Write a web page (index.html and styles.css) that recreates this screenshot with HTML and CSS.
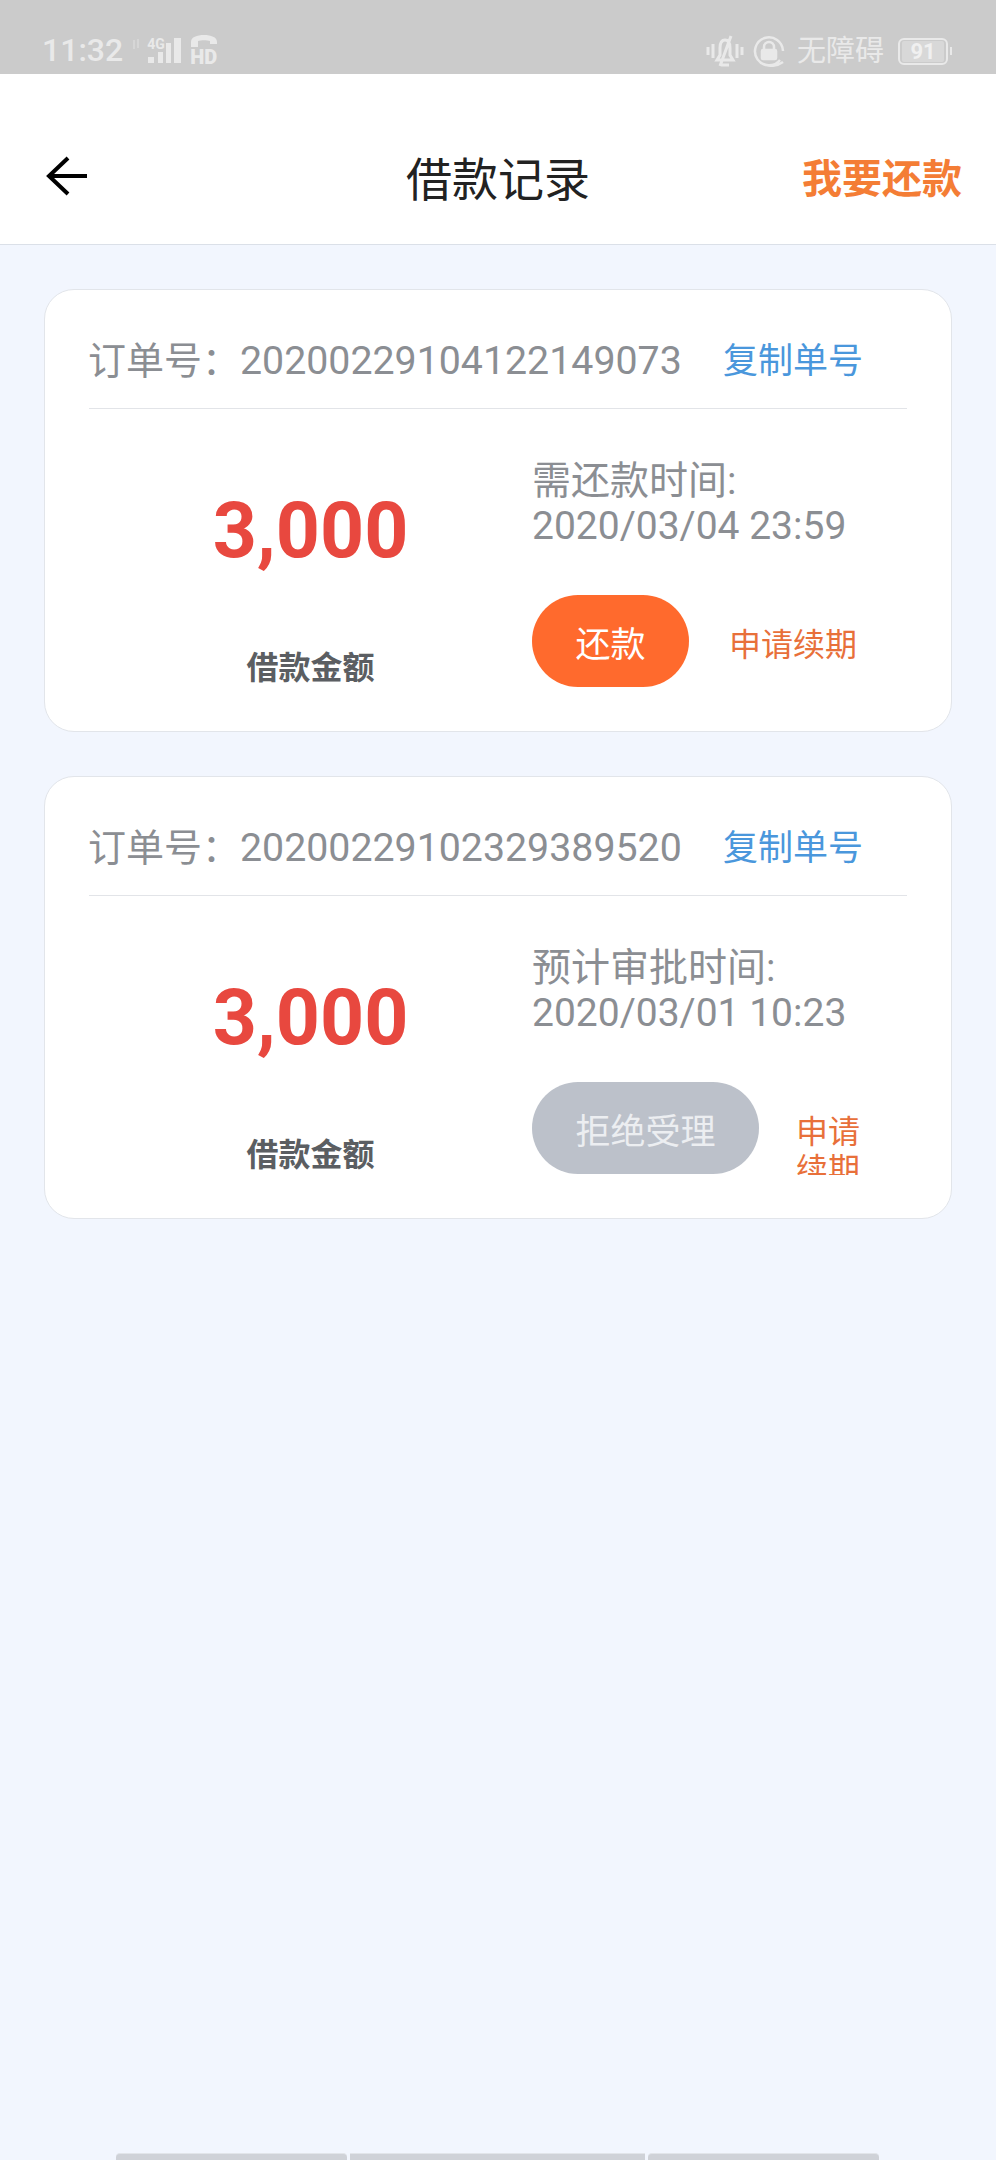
FILE: index.html
```html
<!DOCTYPE html>
<html lang="zh-CN">
<head>
  <meta charset="UTF-8" />
  <meta name="viewport" content="width=device-width, initial-scale=1.0" />
  <title>借款记录</title>
  <link rel="stylesheet" href="styles.css">
</head>
<body>
  <div class="status-bar">
    <div class="status-left">
      <span class="clock">11:32</span>
      <svg class="data-arrows" width="8" height="10" viewBox="0 0 8 10" fill="none" stroke="#dadada" stroke-width="1.5">
        <path d="M2 10V1M6 0v9" />
      </svg>
      <div class="signal">
        <span class="net">4G</span>
        <svg width="36" height="26" viewBox="0 0 36 26" fill="#e9e9e9">
          <rect x="0" y="19" width="6" height="6" />
          <rect x="10" y="14" width="5" height="11" />
          <rect x="18" y="5" width="5" height="20" />
          <rect x="26" y="0" width="7" height="25" />
        </svg>
      </div>
      <div class="hd">
        <svg width="28" height="14" viewBox="0 0 28 14" fill="#e9e9e9">
          <path d="M1 13V8C1 3 7 1 14 1s13 2 13 7v2h-7V7c-3-1-9-1-12 0v6z" />
        </svg>
        <span>HD</span>
      </div>
    </div>
    <div class="status-right">
      <svg class="bell" width="38" height="32" viewBox="0 0 38 32" fill="none" stroke="#e9e9e9" stroke-width="3">
        <path d="M2 12v8M7 9v14M31 9v14M36 12v8" />
        <path d="M11 25h16l-3-5v-7c0-5-2-8-5-8s-5 3-5 8v7zM15 30h8M25 1L14 31" />
      </svg>
      <svg width="32" height="32" viewBox="0 0 32 32" fill="none" stroke="#e9e9e9" stroke-width="2.5">
        <path d="M27 25A14 14 0 1 1 30 16M30 27c-7 5-15 4-20 2" />
        <path d="M11 15v-3a5 5 0 0 1 10 0v3" />
        <rect x="9" y="15" width="14" height="9" rx="1" fill="#e9e9e9" />
      </svg>
      <span class="access">无障碍</span>
      <div class="battery">
        <div class="battery-body"><span>91</span></div>
        <div class="battery-tip"></div>
      </div>
    </div>
  </div>

  <header class="nav">
    <svg class="back" width="44" height="40" viewBox="0 0 44 40" fill="none" stroke="#000" stroke-width="4">
      <path d="M42 20H4M23 2L4 20l19 18" />
    </svg>
    <h1>借款记录</h1>
    <a class="repay-link">我要还款</a>
  </header>

  <main class="list">
    <section class="card">
      <div class="order">
        <span class="order-no">订单号：<span class="num-long">20200229104122149073</span></span>
        <a class="copy">复制单号</a>
      </div>
      <div class="card-body">
        <div class="amount">
          <div class="amount-value">3,000</div>
          <div class="amount-label">借款金额</div>
        </div>
        <div class="detail">
          <div class="time">
            <div>需还款时间:</div>
            <div>2020/03/04 23:59</div>
          </div>
          <div class="actions">
            <button class="btn btn-repay">还款</button>
            <a class="extend">申请续期</a>
          </div>
        </div>
      </div>
    </section>

    <section class="card">
      <div class="order">
        <span class="order-no">订单号：<span class="num-long">20200229102329389520</span></span>
        <a class="copy">复制单号</a>
      </div>
      <div class="card-body">
        <div class="amount">
          <div class="amount-value">3,000</div>
          <div class="amount-label">借款金额</div>
        </div>
        <div class="detail">
          <div class="time">
            <div>预计审批时间:</div>
            <div>2020/03/01 10:23</div>
          </div>
          <div class="actions">
            <button class="btn btn-off">拒绝受理</button>
            <a class="extend extend-narrow">申请续期</a>
          </div>
        </div>
      </div>
    </section>
  </main>

  <div class="tabs">
    <div class="tab tab-side"></div>
    <div class="tab tab-mid"></div>
    <div class="tab tab-side"></div>
  </div>
</body>
</html>
```

FILE: styles.css
```css
* {
  box-sizing: border-box;
}
body {
  margin: 0;
  height: 2160px;
  overflow: hidden;
  display: flex;
  flex-direction: column;
  background-color: #f2f6fe;
  font-family: Roboto, "Noto Sans CJK SC", sans-serif;
}

/* status bar */
.status-bar {
  height: 74px;
  background-color: #cbcbcb;
  color: #e9e9e9;
  display: flex;
  justify-content: space-between;
  align-items: flex-end;
  padding: 0 44px 5px 42px;
}
.status-left,
.status-right {
  display: flex;
  align-items: center;
}
.clock {
  font-size: 32px;
  font-weight: 500;
  line-height: 38px;
}
.data-arrows {
  margin: 0 0 12px 9px;
}
.signal {
  position: relative;
  width: 36px;
  height: 26px;
  margin: 1px 0 0 8px;
}
.signal svg {
  position: absolute;
  left: 0;
  bottom: 0;
}
.net {
  position: absolute;
  left: -1px;
  top: -1px;
  font-size: 14px;
  font-weight: 700;
  line-height: 14px;
}
.hd {
  margin: -2px 0 0 6px;
  width: 28px;
  display: flex;
  flex-direction: column;
  font-size: 20px;
  font-weight: 900;
  line-height: 16px;
}
.hd svg {
  margin-bottom: 1px;
}
.status-right {
  gap: 10px;
}
.bell {
  margin-right: -1px;
}
.access {
  font-size: 29px;
  line-height: 36px;
  margin-left: 2px;
}
.battery {
  display: flex;
  align-items: center;
  margin-left: 4px;
}
.battery-body {
  width: 50px;
  height: 27px;
  border: 2px solid #e9e9e9;
  border-radius: 6px;
  padding: 1px 2px;
  display: flex;
}
.battery-body span {
  flex: 1;
  background-color: #d8d8d8;
  border-radius: 2px;
  text-align: center;
  color: #f0f0f0;
  font-size: 22px;
  font-weight: 700;
  line-height: 21px;
}
.battery-tip {
  width: 2px;
  height: 8px;
  margin-left: 2px;
  background-color: #e9e9e9;
}

/* nav */
.nav {
  height: 171px;
  background-color: #fff;
  border-bottom: 1px solid #dbe0e8;
  display: flex;
  align-items: center;
  justify-content: space-between;
  padding: 34px 34px 0 45px;
  position: relative;
}
.nav h1 {
  position: absolute;
  left: 0;
  right: 0;
  margin: 0;
  text-align: center;
  font-size: 46px;
  font-weight: 400;
  color: #222;
}
.repay-link {
  position: relative;
  font-size: 40px;
  font-weight: 700;
  color: #f47d35;
}

/* cards */
.list {
  flex: 1;
  padding: 44px 44px 0;
  display: flex;
  flex-direction: column;
  gap: 44px;
}
.card {
  height: 443px;
  background-color: #fff;
  border: 1px solid #e2e5ea;
  border-radius: 30px;
  padding: 0 44px;
}
.order {
  height: 119px;
  padding: 16px 44px 0 0;
  border-bottom: 1px solid #e2e4e8;
  display: flex;
  align-items: center;
  justify-content: space-between;
  font-size: 38px;
  color: #8b8e93;
}
.order-no {
  margin-left: -1px;
}
.num-long {
  font-size: 39.3px;
}
.copy {
  font-size: 35px;
  color: #4a97dc;
}
.card-body {
  display: flex;
  padding-top: 50px;
}
.amount {
  width: 443px;
  padding-top: 25px;
  text-align: center;
}
.amount-value {
  font-size: 77px;
  font-weight: 700;
  line-height: 94px;
  color: #e8483f;
  margin-bottom: 67px;
}
.amount-label {
  font-size: 32px;
  font-weight: 700;
  line-height: 46px;
  color: #5b5e62;
}
.detail {
  flex: 1;
}
.time {
  font-size: 39px;
  line-height: 45px;
  color: #8b8e93;
}
.actions {
  display: flex;
  align-items: center;
  margin-top: 46px;
}
.btn {
  height: 92px;
  padding: 0 43.5px;
  border: none;
  border-radius: 46px;
  font-family: inherit;
  font-size: 35px;
  color: #fff;
}
.btn-repay {
  background-color: #ff6a2d;
}
.btn-off {
  background-color: #bcc1ca;
  color: #eceef1;
}
.extend {
  margin: 8px 0 0 40px;
  font-size: 32px;
  line-height: 38px;
  color: #e8703a;
}
.extend-narrow {
  width: 64px;
  height: 62px;
  margin: 0 0 -1px 37px;
  align-self: flex-end;
  overflow: hidden;
}

/* bottom bars */
.tabs {
  height: 7px;
  padding: 0 117px 0 116px;
  display: flex;
  gap: 3px;
}
.tab {
  background-color: #cfd2d8;
  border-top: 1px solid #e2e5ea;
}
.tab-side {
  width: 231px;
  border-radius: 4px 4px 0 0;
}
.tab-mid {
  width: 295px;
}
```
